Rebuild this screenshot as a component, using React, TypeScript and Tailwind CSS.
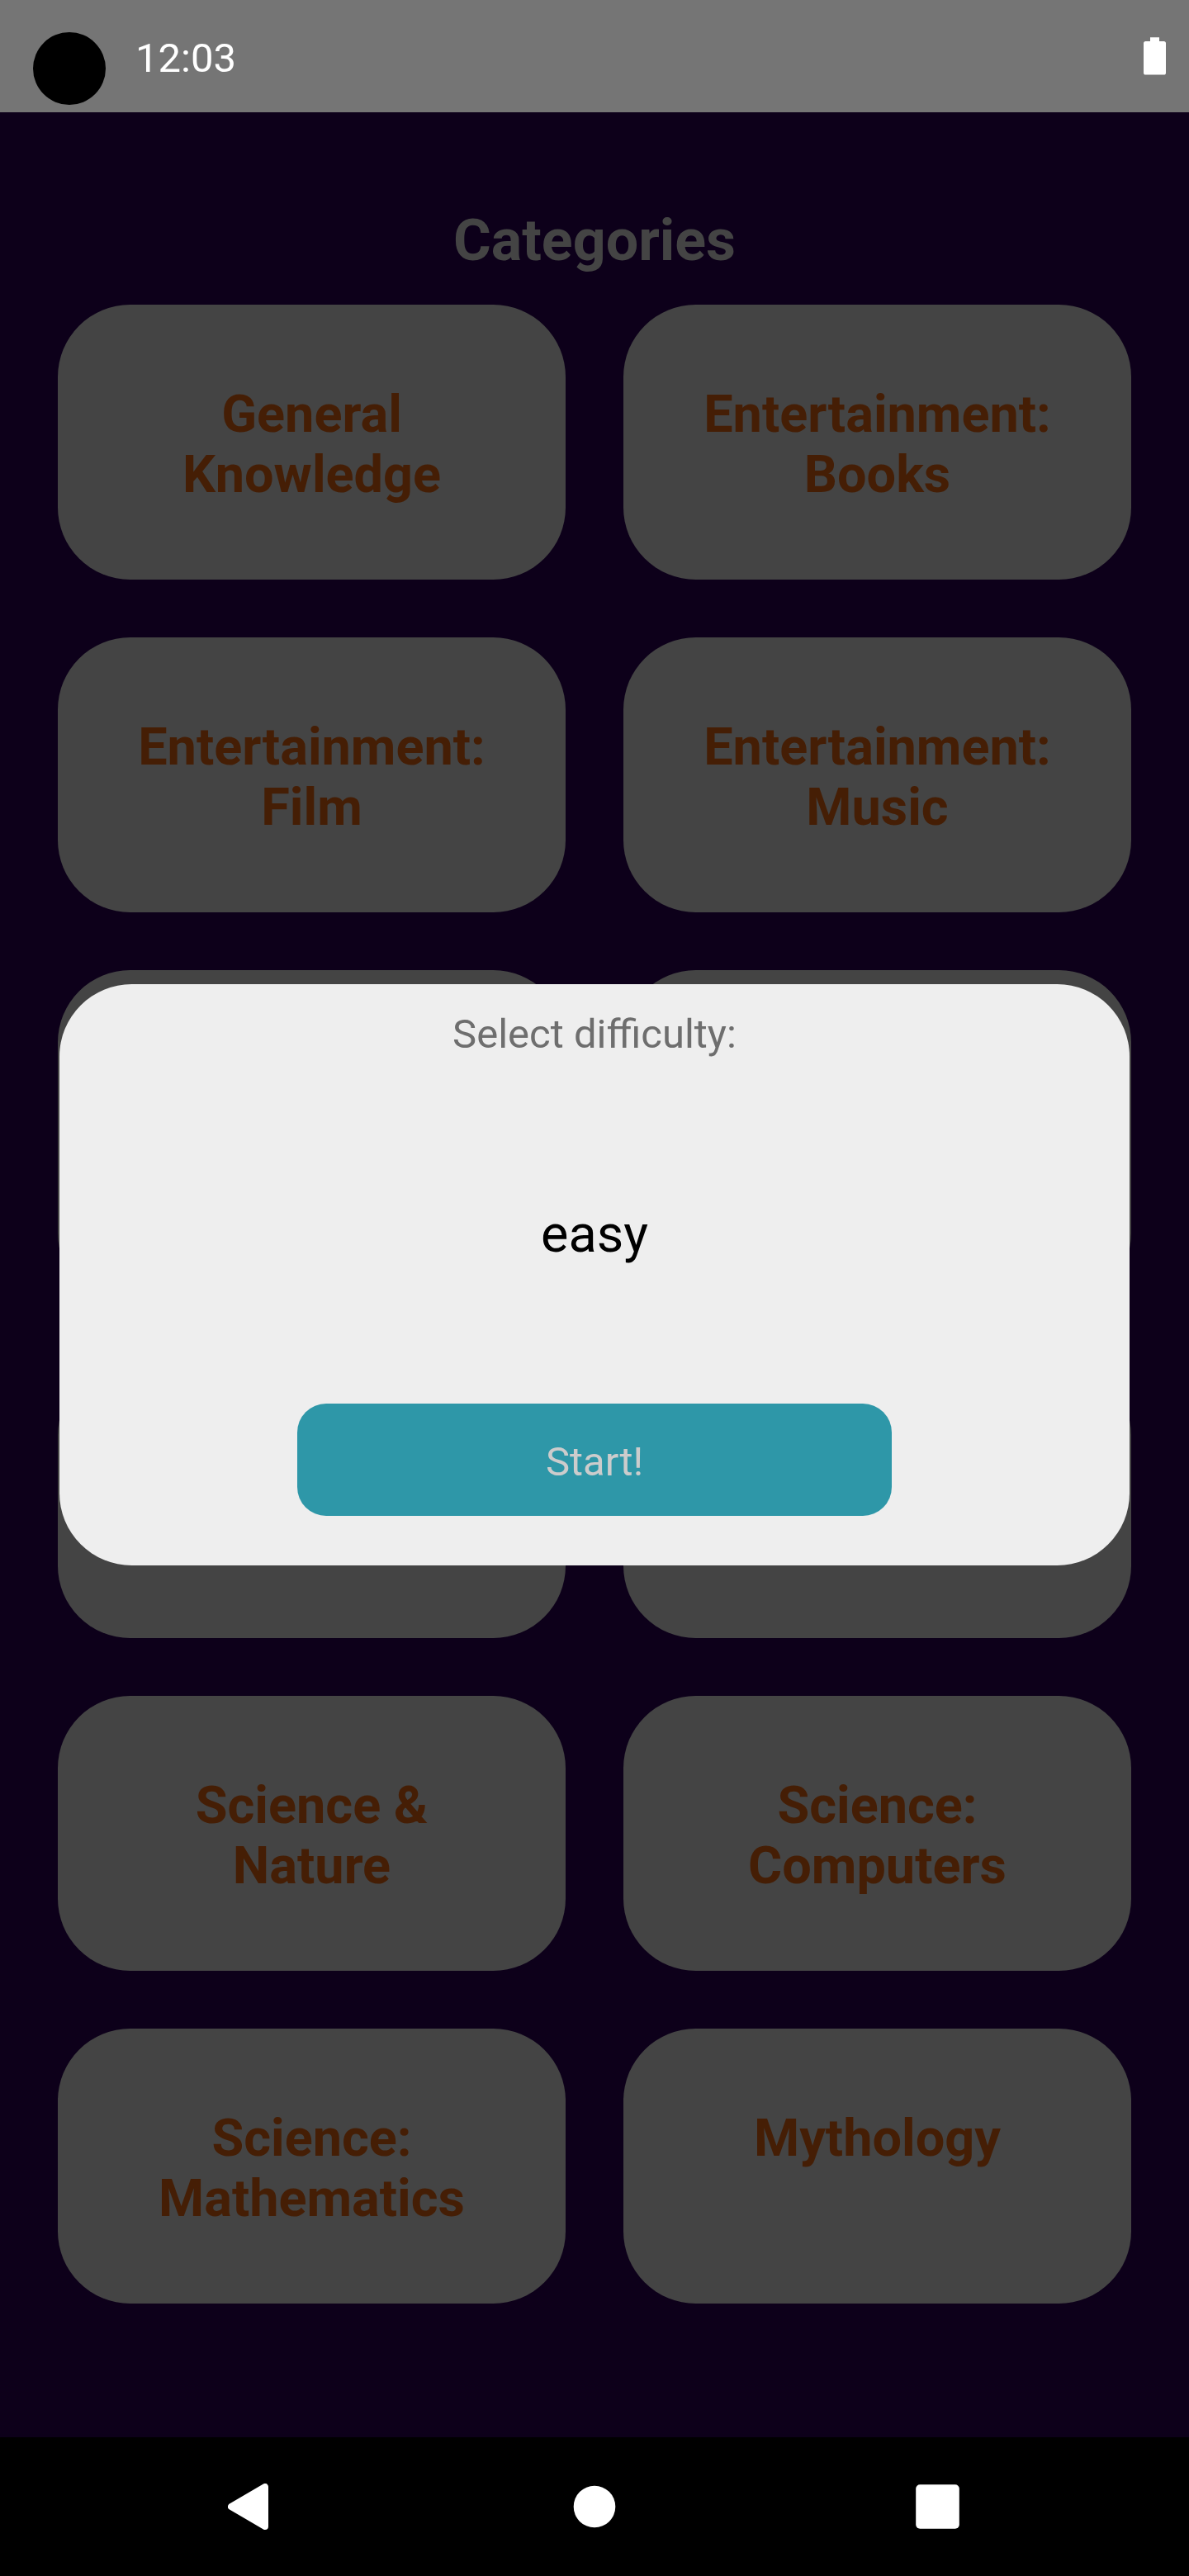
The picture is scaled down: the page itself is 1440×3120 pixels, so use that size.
type Row = { left: string[]; right: string[]; tall?: boolean };

const rows: Row[] = [
  { left: ['General', 'Knowledge'], right: ['Entertainment:', 'Books'] },
  { left: ['Entertainment:', 'Film'], right: ['Entertainment:', 'Music'] },
  { left: [], right: [], tall: true },
  { left: [], right: [] },
  { left: ['Science &', 'Nature'], right: ['Science:', 'Computers'] },
  { left: ['Science:', 'Mathematics'], right: ['Mythology'] },
];

function Card({ lines }: { lines: string[] }) {
  return (
    <div className="flex-1 rounded-[87.5px] bg-[#444444] pt-24 text-center text-[63px] leading-[73px] font-bold text-[#451e05]">
      {lines.map((line) => (
        <div key={line}>{line}</div>
      ))}
    </div>
  );
}

function StatusBar() {
  return (
    <header className="flex h-[136px] shrink-0 items-start bg-[#757575] text-white">
      <div className="mt-[39px] ml-10 size-[88px] rounded-full bg-black" />
      <div className="mt-[42px] ml-[36px] text-[49px] leading-[57px]">12:03</div>
      <svg className="mt-[45px] mr-7 ml-auto" width="27" height="46" viewBox="0 0 27 46" fill="currentColor">
        <path d="M8 0.3H19V5H24.500Q27 5 27 7.500V43Q27 45.600 24.500 45.600H2.500Q0 45.600 0 43V7.500Q0 5 2.500 5H8Z" />
      </svg>
    </header>
  );
}

function NavBar() {
  return (
    <nav className="flex h-[168px] shrink-0 items-center bg-black pl-[276px] text-white">
      <svg width="50" height="56" viewBox="0 0 50 56" fill="currentColor">
        <path d="M4 28 45 4V52Z" stroke="currentColor" strokeWidth="8" strokeLinejoin="round" />
      </svg>
      <svg className="ml-[368px]" width="52" height="52" viewBox="0 0 52 52" fill="currentColor">
        <circle cx="26" cy="26" r="25.3" />
      </svg>
      <svg className="ml-[363px]" width="53" height="54" viewBox="0 0 53 54" fill="currentColor">
        <rect x="0.2" y="0.3" width="52.600" height="53.400" rx="5" />
      </svg>
    </nav>
  );
}

function DifficultyDialog() {
  return (
    <div
      role="dialog"
      className="absolute top-[1192px] left-[72px] flex h-[704px] w-[1296px] flex-col items-center rounded-[87.5px] bg-[#eeeeee]"
    >
      <div className="mt-8 text-[49px] leading-[57px] text-[#6e6e6e]">Select difficulty:</div>
      <div className="mt-[177px] text-[63px] leading-[73px] text-black">easy</div>
      <button className="mt-[169px] flex h-[136px] w-[720px] items-start justify-center rounded-[35px] bg-[#2e97a8] pt-[42px] text-[49px] leading-[57px] text-[#cccccc]">
        Start!
      </button>
    </div>
  );
}

export default function App() {
  return (
    <div className="relative flex h-[3120px] w-[1440px] flex-col overflow-hidden bg-[#0d001a] font-['Roboto',sans-serif]">
      <StatusBar />
      <main className="flex flex-1 flex-col px-[70px] pt-[114px]">
        <h1 className="text-center text-[70px] leading-[82px] font-bold text-[#444444]">Categories</h1>
        <div className="mt-[37px] flex flex-col gap-[70px]">
          {rows.map((row, i) => (
            <div key={i} className={row.tall ? 'flex h-[406px] gap-[70px]' : 'flex h-[333px] gap-[70px]'}>
              <Card lines={row.left} />
              <Card lines={row.right} />
            </div>
          ))}
        </div>
      </main>
      <NavBar />
      <DifficultyDialog />
    </div>
  );
}
